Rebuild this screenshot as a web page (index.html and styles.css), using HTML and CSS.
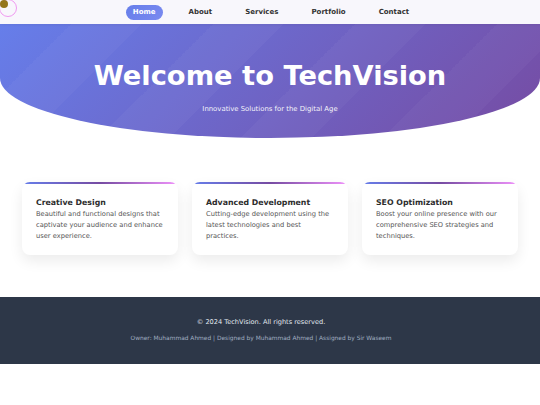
FILE: index.html
```html
<!DOCTYPE html>
<html lang="en">
<head>
    <meta charset="UTF-8">
    <meta name="viewport" content="width=device-width, initial-scale=1.0">
    <title>TechVision</title>
    <link rel="stylesheet" href="styles.css">
</head>
<body>

    <!-- cursor follower -->
    <div class="cursor-dot"></div>
    <div class="cursor-ring"></div>

    <nav class="navbar">
        <a href="#" class="nav-link active">Home</a>
        <a href="#" class="nav-link">About</a>
        <a href="#" class="nav-link">Services</a>
        <a href="#" class="nav-link">Portfolio</a>
        <a href="#" class="nav-link">Contact</a>
    </nav>

    <header class="hero">
        <h1>Welcome to TechVision</h1>
        <p>Innovative Solutions for the Digital Age</p>
    </header>

    <section class="features">
        <div class="card">
            <h3>Creative Design</h3>
            <p>Beautiful and functional designs that captivate your audience and enhance user experience.</p>
        </div>
        <div class="card">
            <h3>Advanced Development</h3>
            <p>Cutting-edge development using the latest technologies and best practices.</p>
        </div>
        <div class="card">
            <h3>SEO Optimization</h3>
            <p>Boost your online presence with our comprehensive SEO strategies and techniques.</p>
        </div>
    </section>

    <footer class="footer">
        <p class="copy">&copy; 2024 TechVision. All rights reserved.</p>
        <p class="credits">Owner: Muhammad Ahmed | Designed by Muhammad Ahmed | Assigned by Sir Waseem</p>
    </footer>

</body>
</html>
```

FILE: styles.css
```css
* {
    box-sizing: border-box;
}

body {
    font-family: "DejaVu Sans", Verdana, sans-serif;
    background-color: #fff;
    margin: 0;
    color: #333;
}

/* Cursor follower */
.cursor-dot {
    position: absolute;
    left: 0;
    top: 0;
    width: 8px;
    height: 8px;
    border-radius: 50%;
    background-color: #94761c;
    z-index: 20;
}

.cursor-ring {
    position: absolute;
    left: -1px;
    top: -1px;
    width: 18px;
    height: 18px;
    border-radius: 50%;
    border: 1px solid #f09af0;
    z-index: 19;
}

/* Navigation */
.navbar {
    height: 24px;
    display: flex;
    justify-content: center;
    align-items: center;
    gap: 19px;
    background-color: #f8f7fc;
    box-shadow: 0 1px 3px rgba(0, 0, 0, 0.06);
    position: relative;
    z-index: 5;
    padding-left: 2px;
}

.nav-link {
    font-size: 7px;
    font-weight: bold;
    color: #333;
    text-decoration: none;
    padding: 3.5px 7px;
    border-radius: 8px;
}

.nav-link.active {
    background: linear-gradient(135deg, #667eea, #7a8af0);
    color: #fff;
}

/* Hero */
.hero {
    height: 114px;
    padding-top: 36px;
    text-align: center;
    color: #fff;
    background-color: #6b63d0;
    background-image:
        linear-gradient(-45deg, rgba(255, 255, 255, 0.03) 25%, transparent 25%, transparent 50%, rgba(255, 255, 255, 0.03) 50%, rgba(255, 255, 255, 0.03) 75%, transparent 75%),
        linear-gradient(135deg, #667eea 0%, #764ba2 100%);
    background-size: 142px 142px, 100% 100%;
    border-radius: 0 0 50% 50% / 0 0 60px 60px;
}

.hero h1 {
    font-size: 27.3px;
    line-height: 31px;
    margin: 0;
}

.hero p {
    font-size: 6.9px;
    margin: 14px 0 0;
    opacity: 0.92;
}

/* Feature cards */
.features {
    display: grid;
    grid-template-columns: repeat(3, 1fr);
    gap: 14px;
    padding: 44px 22px 42px;
}

.card {
    background-color: #fff;
    border-radius: 8px;
    padding: 16px 14px 13px;
    box-shadow: 0 6px 14px rgba(0, 0, 0, 0.08);
    position: relative;
    overflow: hidden;
}

.card::before {
    content: "";
    position: absolute;
    left: 0;
    top: 0;
    width: 100%;
    height: 2px;
    background: linear-gradient(90deg, #667eea, #764ba2, #f093fb);
}

.card h3 {
    font-size: 7.8px;
    margin: 0 0 2px;
    color: #2d2d2d;
}

.card p {
    font-size: 6.7px;
    line-height: 11px;
    margin: 0;
    color: #555;
}

/* Footer */
.footer {
    background-color: #2d3748;
    text-align: center;
    height: 67px;
    padding: 21px 18px 0 0;
}

.copy {
    font-size: 6.6px;
    color: #e2e8f0;
    margin: 0;
}

.credits {
    font-size: 5.9px;
    color: #a0aec0;
    margin: 9px 0 0;
}
```
